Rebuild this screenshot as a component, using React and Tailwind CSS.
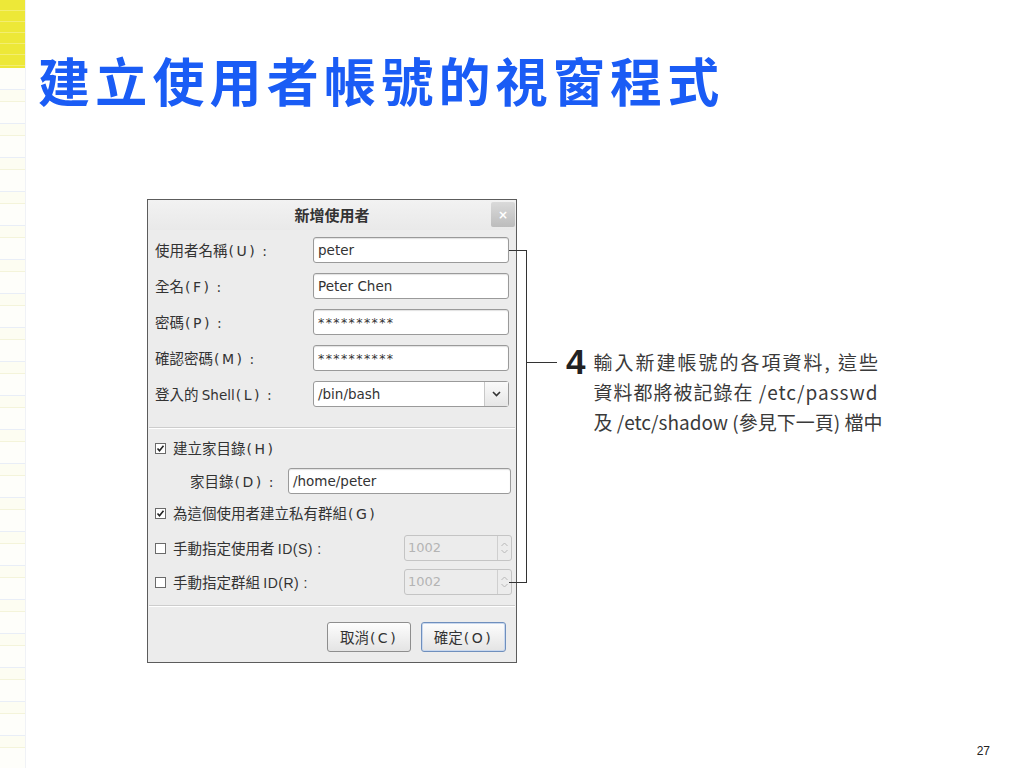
const CJK = "font-['Noto_Sans_CJK_TC','Noto_Sans_CJK_SC',sans-serif]";
const LAT = "font-['DejaVu_Sans','Noto_Sans_CJK_TC',sans-serif]";

function Paren({ children }) {
  return <span className={`${LAT} tracking-[2.5px] text-[14px] ml-[1px]`}>{children}</span>;
}

function Label({ cjk, key1, extra }) {
  return (
    <span className={`${CJK} text-[14.5px] text-[#333] whitespace-nowrap`}>
      {cjk}
      {extra && <span className={`${LAT} text-[13.5px]`}>{extra}</span>}
      <Paren>({key1})</Paren>
      <span className={`${LAT} text-[14px] ml-[5px]`}>:</span>
    </span>
  );
}

function TextBox({ value, width = 'w-[196px]', stars }) {
  return (
    <div
      className={`${width} h-[26px] bg-white border border-[#9a9a9a] rounded-[3px] shadow-[inset_0_1px_1px_rgba(0,0,0,0.12)] flex items-center pl-[4px]`}
    >
      {stars ? (
        <span className={`${LAT} text-[12.5px] tracking-[1.4px] text-[#333] leading-none pt-[2px]`}>**********</span>
      ) : (
        <span className={`${LAT} text-[13.5px] text-[#333]`}>{value}</span>
      )}
    </div>
  );
}

function CheckBox({ checked }) {
  return (
    <svg width="11" height="11" viewBox="0 0 11 11" className="shrink-0">
      <rect x="0.5" y="0.5" width="10" height="10" fill="#fff" stroke="#6a6a6a" />
      {checked && <path d="M2.5 5.5 L4.5 7.8 L8.5 2.8" fill="none" stroke="#222" strokeWidth="1.6" />}
    </svg>
  );
}

function Spin() {
  return (
    <div className="w-[108px] h-[26px] border border-[#c4c4c4] rounded-[3px] bg-[#ececec] flex">
      <div className={`flex-1 flex items-center pl-[3px] ${LAT} text-[13px] text-[#b4b4b4]`}>1002</div>
      <div className="w-[14px] border-l border-[#cfcfcf] flex flex-col items-center justify-center gap-[2px]">
        <svg width="7" height="5" viewBox="0 0 7 5">
          <path d="M0.5 4 L3.5 1 L6.5 4" fill="none" stroke="#b8b8b8" strokeWidth="1" />
        </svg>
        <svg width="7" height="5" viewBox="0 0 7 5">
          <path d="M0.5 1 L3.5 4 L6.5 1" fill="none" stroke="#b8b8b8" strokeWidth="1" />
        </svg>
      </div>
    </div>
  );
}

function Sep() {
  return <div className="h-[2px] border-t border-[#cdcdcd] bg-white mx-[1px]" />;
}

function Dialog() {
  const rows = [
    { cjk: '使用者名稱', k: 'U', value: 'peter' },
    { cjk: '全名', k: 'F', value: 'Peter Chen' },
    { cjk: '密碼', k: 'P', stars: true },
    { cjk: '確認密碼', k: 'M', stars: true },
  ];
  return (
    <div className="w-[370px] h-[464px] shrink-0 border border-[#5c5c5c] bg-[#ececec] flex flex-col">
      <div className="relative h-[30px] flex items-center justify-center bg-gradient-to-b from-[#f2f2f2] to-[#e9e9e9]">
        <span className={`${CJK} font-bold text-[15px] text-[#333]`}>新增使用者</span>
        <div className="absolute right-[1px] top-[2px] w-[24px] h-[25px] rounded-[2px] bg-gradient-to-b from-[#dadada] to-[#bcbcbc] flex items-center justify-center">
          <span className="font-['DejaVu_Sans',sans-serif] font-bold text-[12px] text-white leading-none">×</span>
        </div>
      </div>

      <div className="flex flex-col gap-[10px] pt-[7px] pl-[7px] pr-[6px]">
        {rows.map(r => (
          <div key={r.k} className="h-[26px] flex items-center">
            <div className="w-[158px]">
              <Label cjk={r.cjk} key1={r.k} />
            </div>
            <TextBox value={r.value} stars={r.stars} />
          </div>
        ))}
        <div className="h-[26px] flex items-center">
          <div className="w-[158px]">
            <Label cjk="登入的 " extra="Shell" key1="L" />
          </div>
          <div className="w-[196px] h-[26px] bg-white border border-[#9a9a9a] rounded-[3px] flex">
            <div className={`flex-1 flex items-center pl-[4px] ${LAT} text-[13.5px] text-[#333]`}>/bin/bash</div>
            <div className="w-[24px] border-l border-[#c8c8c8] bg-gradient-to-b from-[#fafafa] to-[#e6e6e6] flex items-center justify-center">
              <svg width="9" height="6" viewBox="0 0 9 6">
                <path d="M1 1 L4.5 4.5 L8 1" fill="none" stroke="#333" strokeWidth="1.6" />
              </svg>
            </div>
          </div>
        </div>
      </div>

      <div className="mt-[20px]">
        <Sep />
      </div>

      <div className="mt-[8px] h-[22px] pl-[7px] flex items-center gap-[7px]">
        <CheckBox checked />
        <span className={`${CJK} text-[14.5px] text-[#333]`}>
          建立家目錄<Paren>(H)</Paren>
        </span>
      </div>

      <div className="mt-[9px] h-[26px] pl-[42px] pr-[3px] flex items-center">
        <div className="w-[98px]">
          <Label cjk="家目錄" key1="D" />
        </div>
        <TextBox value="/home/peter" width="w-[223px]" />
      </div>

      <div className="mt-[8px] h-[22px] pl-[7px] flex items-center gap-[7px]">
        <CheckBox checked />
        <span className={`${CJK} text-[14.5px] text-[#333]`}>
          為這個使用者建立私有群組<Paren>(G)</Paren>
        </span>
      </div>

      <div className="mt-[11px] h-[26px] pl-[7px] pr-[3px] flex items-center">
        <div className="w-[249px] flex items-center gap-[7px]">
          <CheckBox />
          <span className={`${CJK} text-[14.5px] text-[#333] whitespace-nowrap`}>
            手動指定使用者 <span className="font-['Liberation_Sans',sans-serif] text-[14px] tracking-[0.5px]">ID(S) :</span>
          </span>
        </div>
        <Spin />
      </div>

      <div className="mt-[8px] h-[26px] pl-[7px] pr-[3px] flex items-center">
        <div className="w-[249px] flex items-center gap-[7px]">
          <CheckBox />
          <span className={`${CJK} text-[14.5px] text-[#333] whitespace-nowrap`}>
            手動指定群組 <span className="font-['Liberation_Sans',sans-serif] text-[14px] tracking-[0.5px]">ID(R) :</span>
          </span>
        </div>
        <Spin />
      </div>

      <div className="mt-[10px]">
        <Sep />
      </div>

      <div className="mt-[15px] pr-[10px] flex justify-end gap-[10px]">
        <div className="w-[84px] h-[30px] rounded-[3px] border border-[#8e8e8e] bg-gradient-to-b from-[#fdfdfd] to-[#e4e4e4] flex items-center justify-center">
          <span className={`${CJK} text-[14.5px] text-[#333]`}>
            取消<Paren>(C)</Paren>
          </span>
        </div>
        <div className="w-[85px] h-[30px] rounded-[3px] border border-[#6f8fbd] shadow-[inset_0_0_0_1px_#c9d8ee] bg-gradient-to-b from-[#fdfdfd] to-[#e4e4e4] flex items-center justify-center">
          <span className={`${CJK} text-[14.5px] text-[#333]`}>
            確定<Paren>(O)</Paren>
          </span>
        </div>
      </div>
    </div>
  );
}

export default function App() {
  return (
    <div className="w-[1024px] h-[768px] bg-white flex overflow-hidden">
      <div className="w-[26px] shrink-0 flex flex-col border-r border-[#f0f2f6]">
        <div className="h-[68px] bg-[repeating-linear-gradient(180deg,#ede838_0px,#ede838_10px,#f3ee70_10px,#f3ee70_11px)]" />
        <div className="flex-1 bg-[repeating-linear-gradient(180deg,#fefefa_0px,#fefefa_21px,#e9eef7_21px,#e9eef7_22px,#fdfdf2_22px,#fdfdf2_33px,#f4f4da_33px,#f4f4da_34px)]" />
      </div>

      <div className="flex-1 flex flex-col">
        <h1
          className={`pl-[12px] pt-[54px] text-[52px] leading-none font-bold tracking-[5.2px] text-[#1a5cf5] ${CJK}`}
        >
          建立使用者帳號的視窗程式
        </h1>

        <div className="mt-[93px] ml-[121px] flex items-start">
          <Dialog />
          <div className="mt-[51px] ml-[-8px] w-[18px] h-[333px] border-t border-r border-b border-[#333] shrink-0" />
          <div className="mt-[141px] flex items-start">
            <div className="mt-[22px] w-[30px] h-px bg-[#333]" />
            <span className="ml-[9px] mt-[4px] font-['Liberation_Sans',sans-serif] font-bold text-[35px] leading-none text-[#222]">
              4
            </span>
            <div
              className={`ml-[8px] mt-[7px] flex flex-col text-[19px] leading-[30px] text-[#3a3a3a] whitespace-nowrap ${CJK}`}
            >
              <span className="tracking-[2px]">輸入新建帳號的各項資料, 這些</span>
              <span className="tracking-[1px]">資料都將被記錄在 /etc/passwd</span>
              <span>及 /etc/shadow (參見下一頁) 檔中</span>
            </div>
          </div>
        </div>

        <div className="flex-1" />
        <div className="flex justify-end pr-[34px] pb-[8px]">
          <span className="font-['Liberation_Sans',sans-serif] text-[12px] text-[#222]">27</span>
        </div>
      </div>
    </div>
  );
}
